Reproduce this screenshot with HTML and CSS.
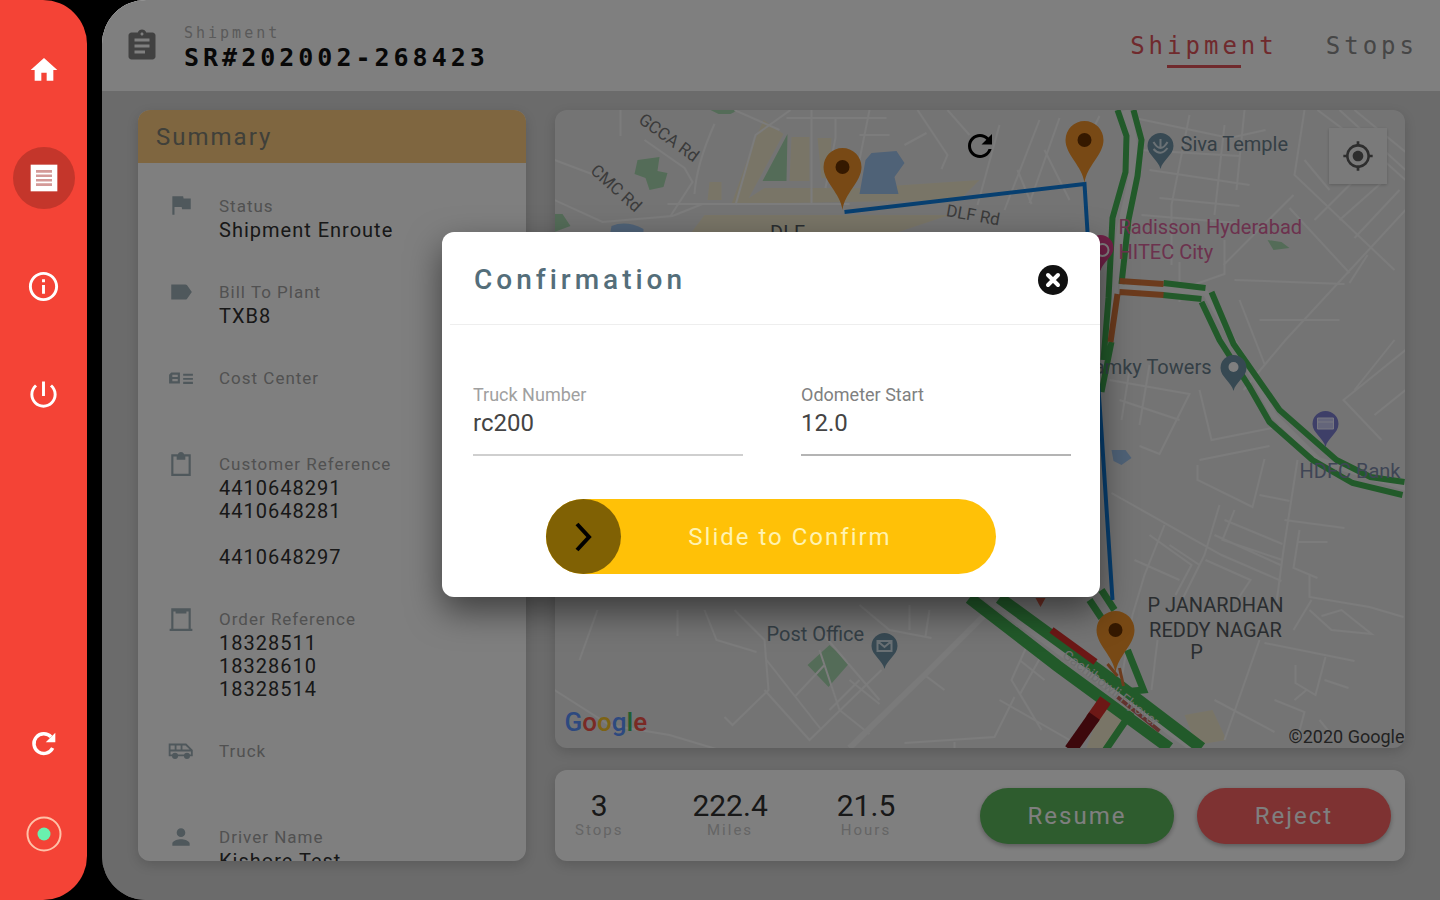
FILE: index.html
```html
<!DOCTYPE html>
<html lang="en">
<head>
    <meta charset="utf-8" />
    <meta name="viewport" content="width=device-width, initial-scale=1" />
    <title>Shipment SR#202002-268423</title>
    <link rel="stylesheet" href="styles.css">
</head>

<body>
<div class="app">

    <!-- left menu -->
    <nav class="sidebar">
        <div class="side-group">
            <button class="side-btn" aria-label="Home"><svg width="32" height="32" viewBox="0 0 24 24"><path d="M10 20v-6h4v6h5v-8h3L12 3 2 12h3v8z"/></svg></button>
            <button class="side-btn active" aria-label="Shipments"><svg width="32" height="32" viewBox="0 0 24 24"><path d="M2 2h20v20H2z"/><path class="side-lines" d="M6 7h12M6 10.300h12M6 13.700h12M6 17h12"/></svg></button>
            <button class="side-btn" aria-label="Info"><svg width="35" height="35" viewBox="0 0 24 24"><path d="M11 7h2v2h-2zm0 4h2v6h-2zm1-9C6.480 2 2 6.480 2 12s4.480 10 10 10 10-4.480 10-10S17.520 2 12 2zm0 18c-4.410 0-8-3.590-8-8s3.590-8 8-8 8 3.590 8 8-3.590 8-8 8z"/></svg></button>
            <button class="side-btn" aria-label="Log out"><svg width="35" height="35" viewBox="0 0 24 24"><path d="M13 3h-2v10h2V3zm4.830 2.170l-1.420 1.420C17.990 7.860 19 9.810 19 12c0 3.870-3.130 7-7 7s-7-3.130-7-7c0-2.190 1.010-4.140 2.580-5.420L6.170 5.170C4.230 6.820 3 9.260 3 12c0 4.970 4.030 9 9 9s9-4.030 9-9c0-2.740-1.230-5.180-3.170-6.830z"/></svg></button>
        </div>
        <div class="side-group">
            <button class="side-btn" aria-label="Sync"><svg width="32" height="32" viewBox="0 0 24 24" fill="none" stroke="#fff" stroke-width="2.6"><path d="M18.500 15a7.400 7.400 0 1 1-1.200-8.300"/><path d="M20.500 3.500v7.200h-7.200z" fill="#fff" stroke="none"/></svg></button>
            <button class="side-btn" aria-label="Online"><svg width="38" height="38" viewBox="0 0 38 38"><circle cx="19" cy="19" r="16.500" fill="none" stroke="#ffc1a8" stroke-width="2"/><circle cx="19" cy="19" r="6.500" fill="#69f0ae"/></svg></button>
        </div>
    </nav>

    <main class="main">
        <header class="topbar">
            <svg class="topbar-icon" width="36" height="36" viewBox="0 0 24 24"><path d="M19 3h-4.180C14.400 1.840 13.300 1 12 1c-1.300 0-2.400.840-2.820 2H5c-1.100 0-2 .900-2 2v14c0 1.100.900 2 2 2h14c1.100 0 2-.900 2-2V5c0-1.100-.900-2-2-2zm-7 0c.550 0 1 .450 1 1s-.450 1-1 1-1-.450-1-1 .450-1 1-1zm2 14H7v-2h7v2zm3-4H7v-2h10v2zm0-4H7V7h10v2z"/></svg>
            <div class="topbar-text">
                <p class="topbar-label">Shipment</p>
                <h1 class="topbar-title">SR#202002-268423</h1>
            </div>
            <div class="tabs">
                <a class="tab current" href="#shipment">Shipment</a>
                <a class="tab" href="#stops">Stops</a>
            </div>
        </header>

        <div class="content">
            <!-- summary -->
            <section class="card summary">
                <h2 class="summary-head">Summary</h2>
                <ul class="summary-list">
                    <li>
                        <svg width="26" height="26" viewBox="0 0 24 24"><path d="M14.400 5L14 3H4v17h2v-7h6.600l.400 2h8V5z"/></svg>
                        <div><p class="label">Status</p><p class="value">Shipment Enroute</p></div>
                    </li>
                    <li>
                        <svg width="26" height="26" viewBox="0 0 24 24"><path d="M17.630 5.840C17.270 5.330 16.670 5 16 5H3v14h13c.670 0 1.270-.330 1.630-.840L22 12z"/></svg>
                        <div><p class="label">Bill To Plant</p><p class="value">TXB8</p></div>
                    </li>
                    <li>
                        <svg width="26" height="26" viewBox="0 0 24 24"><path fill-rule="evenodd" d="M1 17V9l2-2h8v10zm3-6h5v-2H4zm0 4h5v-2H4z"/><path d="M14 8h9v2h-9zM14 12h9v1.500h-9zM14 15.500h9v2h-9z"/></svg>
                        <div><p class="label">Cost Center</p><p class="value"></p></div>
                    </li>
                    <li>
                        <svg width="26" height="26" viewBox="0 0 24 24"><path d="M19 3h-4.180C14.400 1.840 13.300 1 12 1c-1.300 0-2.400.840-2.820 2H3v20h18V3zm0 18H5V5h3v3h8V5h3z"/></svg>
                        <div><p class="label">Customer Reference</p><p class="value">4410648291<br>4410648281<br><br>4410648297</p></div>
                    </li>
                    <li>
                        <svg width="26" height="26" viewBox="0 0 24 24"><path d="M21 2H3v19H1.500v2h21v-2H21zm-2 19H5V5h2v2h10V5h2z"/></svg>
                        <div><p class="label">Order Reference</p><p class="value">18328511<br>18328610<br>18328514</p></div>
                    </li>
                    <li>
                        <svg width="26" height="26" viewBox="0 0 24 24" fill="none"><path d="M1.500 16V6h15l5.500 5.500V16zM1.500 11.500H22M7 6v5.500M12.500 6v5.500" stroke="#9fb0b8" stroke-width="1.700"/><circle cx="6.500" cy="16.500" r="2.800" fill="#9fb0b8"/><circle cx="17.500" cy="16.500" r="2.800" fill="#9fb0b8"/></svg>
                        <div><p class="label">Truck</p><p class="value"></p></div>
                    </li>
                    <li>
                        <svg width="26" height="26" viewBox="0 0 24 24"><path d="M12 12c2.210 0 4-1.790 4-4s-1.790-4-4-4-4 1.790-4 4 1.790 4 4 4zm0 2c-2.670 0-8 1.340-8 4v2h16v-2c0-2.660-5.330-4-8-4z"/></svg>
                        <div><p class="label">Driver Name</p><p class="value">Kishore Test</p></div>
                    </li>
                </ul>
            </section>

            <div class="right">
                <!-- map -->
                <section class="card map">
                    <svg class="map-svg" viewBox="555 110 851 638" preserveAspectRatio="xMidYMid slice">
                        <defs>
                            <g id="pin">
                                <path d="M0 0C-2-17-19-28-19-43a19 19 0 1 1 38 0C19-28 2-17 0 0z"/>
                                <circle cy="-43" r="7" fill="#6b3200"/>
                            </g>
                            <path id="poi" d="M0 0C-2-9-13-14-13-23a13 13 0 1 1 26 0C13-14 2-9 0 0z"/>
                        </defs>

                        <!-- areas -->
                        <g fill="#f3ebcf">
                            <path d="M764 120l20 14-38 70h-14l20-56zM792 137h18v44h-20zM818 138h14l-2 40h-8zM710 182h12v18h-14zM765 188h95l120-8-20 20-220 4zM705 215h245l-60 20H690z"/>
                            <path d="M1105 700l28 10-22 38h-24zM1185 715l28-5 14 30-30 5z"/>
                        </g>
                        <g fill="#a9d9b0">
                            <path d="M788 134l-1 47h-24zM638 160l22-3-2 14 10 2-4 14-14 3-4-12-11-4zM711 110h28l-8 4h-12zM555 214h8l8 12-16 6zM830 645l20 18-21 24-21-22zM1268 240l14 2 8 6-16 2z"/>
                        </g>
                        <g fill="#9fc4ee">
                            <path d="M872 153l25-2 8 12-10 14 4 17h-39l6-34zM612 226q15-6 32 3v8h-34zM1112 450l14 0 6 8-10 7-8-4z"/>
                        </g>

                        <!-- small streets -->
                        <g class="streets">
                            <path d="M555 160l40 15M621 110v26M645 140l40 28 8 14-22 34M668 204h182M555 200l48 22 70-6 30-12M715 124q-18 40-20 70M735 110l45 20M736 205l20-70 35-25M787 118h100M812 110v95M836 118v20l-10 50M860 135h30M870 110l-12 60M918 110l30 45-6 14M948 110l22 25M905 145l22-12"/>
                            <path d="M1000 125l-22 80M1040 120l-35 90M1060 118l-30 85M1070 200l-25-50M1100 116l-20 40M1018 170l14 34M1135 118l95 20 36-8M1140 150l100 6M1150 170l100 15M1160 198l80 8M1142 215l95 8M1190 115l-18 90v60M1225 125l-10 90M1245 110l-8 80"/>
                            <path d="M1305 110l-10 65 100 95M1318 110l60 45 28 25M1340 110l66 60M1355 110l51 42M1330 190l-25-30M1340 220l45-40M1290 208l60 65M1315 220l50-50M1355 238l45-48M1294 195l-70 70M1406 210l-120 130-42 50M1368 255l-18 28M1180 262v40M1225 240v34l-40 14h-20M1235 280l110 4M1240 300l25 64M1260 320h80"/>
                            <path d="M1406 350l-62 50 38 40M1355 390l40-50M1375 415l31-25M1110 380l80 14-30 60-20-8M1120 400l60 20M1130 370l-8 50M1150 365l-10 60M1200 390l12 50 70-14M1200 460l70-14M1198 465v15l55 27 12-48M1260 495l30 6M1112 493l110 62 60 26M1220 505l-15 50-22 44M1235 510l-12 30 60 20M1225 520l58 24M1215 535l66 30M1206 560l45 20-12 18M1298 460l-14 90-8 60M1285 520l60 8M1298 542h30M1300 530l-6 38 24 10M1150 535l42 30-16 30M1170 545l30 20M1165 525l-20 50-12 40-12 70M1135 560l45 20"/>
                            <path d="M1310 575v22l60 10 34 10M1312 600l-18 30M1310 610l22 20 40 4-30-24-20 6M1260 640l-35 100M1265 643l90 18M1296 665v18l20 12 10-38M1325 680l24 8M1275 700l30 12-8 30M1215 700l60 32M1295 700l12-10M1320 720l18 22M1158 640l-6 50"/>
                            <path d="M555 690l55 35 60 10 50 15M598 610l-18 50M678 610v26M705 610l12 30 40 12M735 610l30 30 4 50-36 35-8-8M765 690l45 50 72-70M767 660l55 70M825 665l-30 32M820 650l20 60 30 24M850 680l30 24M820 630l60 70M860 680l-30 30M860 605l30 25 42 8M910 605v25M930 610l-4 26M925 675l20 15M1030 640l-18 40 30 50M1000 700l70 40M1020 660l25 20M905 743l90-6 20-40M955 742v6M1045 650l-25 45"/>
                        </g>
                        <g class="roads">
                            <path d="M990 610l-60 60-80 78" stroke-width="6"/>
                            <path d="M1126 110q15 40 2 90t-16 130" stroke-width="8"/>
                            <path d="M1120 286l86 7 36 62 32 60 45 45 87 28" stroke-width="6"/>
                            <path d="M986 597l120 88 88 64" stroke-width="7"/>
                        </g>

                        <!-- traffic -->
                        <g class="traffic">
                            <path d="M1118 110l9 26-1 36-13 46-4 80-5 62M1134 110l8 30-4 36-9 44-7 64M1164 283l42 5M1163 295l39 4M1212 292l22 52 46 66 57 50 34 17 34 5M1202 302l18 38 30 47 20 35 43 38 40 23 50 12M1112 342l-10 50"/>
                            <path d="M970 598l88 68 112 82M1000 598l110 80 92 70" stroke-width="12"/>
                            <path d="M1090 600l12 18M1102 590l13 20M1128 650l16 40-20 2M1132 712l-26 38" stroke-width="7"/>
                        </g>
                        <g class="traffic slow">
                            <path d="M1120 281l44 3M1120 292l44 3M1118 294l-7 48"/>
                            <path d="M1120 668l4 18M1108 664l10 12" stroke-width="3"/>
                        </g>
                        <path d="M1036 598h10l-5 9z" fill="#e2604a"/>
                        <path d="M1052 630l44 32" stroke="#d8302c" stroke-width="7"/>
                        <path d="M1118 697l42 34" stroke="#c4675c" stroke-width="4"/>
                        <path d="M1106 700l-14 20" stroke="#d8302c" stroke-width="13"/>
                        <path d="M1095 716l-24 34" stroke="#7a1018" stroke-width="13"/>

                        <!-- route -->
                        <path d="M845 212l240-28 3 48 14 200 11 168" fill="none" stroke="#0f7fe0" stroke-width="4"/>

                        <!-- places -->
                        <g fill="#6f93a6">
                            <use href="#poi" x="1161" y="169"/>
                            <use href="#poi" x="1234" y="391"/>
                            <use href="#poi" x="885" y="669"/>
                        </g>
                        <use href="#poi" x="1326" y="447" fill="#7c7fd0"/>
                        <use href="#poi" x="1101" y="271" fill="#e0428f"/>
                        <circle cx="1103" cy="250" r="6" fill="none" stroke="#fff" stroke-width="2"/>
                        <circle cx="1234" cy="367" r="5" fill="#fff"/>
                        <path d="M1154 142q7 12 14 0M1154 149q7 8 14-1M1161 139v10" fill="none" stroke="#d4e2ea" stroke-width="2"/>
                        <path d="M878 641h14v10h-14zM878 641l7 6 7-6" fill="none" stroke="#d4e2ea" stroke-width="2"/>
                        <path d="M1318 418h16v11h-16zM1318 422h16" fill="#c9cbf5" stroke="#eef" stroke-width="1"/>

                        <g class="map-text">
                            <text x="1181" y="151">Siva Temple</text>
                            <text x="1212" y="374" text-anchor="end">Ramky Towers</text>
                            <text x="767" y="641">Post Office</text>
                            <text x="1300" y="478" fill="#7f8bab">HDFC Bank</text>
                            <g fill="#d9649c">
                                <text x="1119" y="234">Radisson Hyderabad</text>
                                <text x="1119" y="259">HITEC City</text>
                            </g>
                            <g class="area-name">
                                <text x="1216" y="612">P JANARDHAN</text>
                                <text x="1216" y="637">REDDY NAGAR</text>
                                <text x="1197" y="659">P</text>
                                <text x="788" y="240">DLF</text>
                            </g>
                            <g class="road-name">
                                <text transform="translate(638 122) rotate(36)">GCCA Rd</text>
                                <text transform="translate(590 172) rotate(42)">CMC Rd</text>
                                <text transform="translate(946 216) rotate(10)">DLF Rd</text>
                                <text class="flyover" transform="translate(1062 657) rotate(37)">Gachibowli Flyover</text>
                            </g>
                        </g>

                        <g fill="#f0932b">
                            <use href="#pin" x="843" y="210"/>
                            <use href="#pin" x="1085" y="183"/>
                            <use href="#pin" x="1116" y="673"/>
                        </g>

                        <text class="google" x="565" y="731"><tspan fill="#5b93ff">G</tspan><tspan fill="#f4554a">o</tspan><tspan fill="#fbc62a">o</tspan><tspan fill="#5b93ff">g</tspan><tspan fill="#3fbf62">l</tspan><tspan fill="#f4554a">e</tspan></text>
                        <text class="copyright" x="1405" y="743" text-anchor="end">©2020 Google</text>
                    </svg>
                    <button class="map-refresh" aria-label="Refresh map"><svg width="36" height="36" viewBox="0 0 24 24"><path d="M17.650 6.350C16.200 4.900 14.210 4 12 4c-4.420 0-7.990 3.580-7.990 8s3.570 8 7.990 8c3.730 0 6.840-2.550 7.730-6h-2.080c-.820 2.330-3.040 4-5.650 4-3.310 0-6-2.690-6-6s2.690-6 6-6c1.660 0 3.140.690 4.220 1.780L13 11h7V4l-2.350 2.350z"/></svg></button>
                    <button class="map-locate" aria-label="My location"><svg width="32" height="32" viewBox="0 0 24 24"><path d="M12 8c-2.210 0-4 1.790-4 4s1.790 4 4 4 4-1.790 4-4-1.790-4-4-4zm8.940 3A8.994 8.994 0 0 0 13 3.060V1h-2v2.060A8.994 8.994 0 0 0 3.060 11H1v2h2.060A8.994 8.994 0 0 0 11 20.940V23h2v-2.060A8.994 8.994 0 0 0 20.940 13H23v-2h-2.060zM12 19c-3.870 0-7-3.130-7-7s3.130-7 7-7 7 3.130 7 7-3.130 7-7 7z"/></svg></button>
                </section>

                <!-- totals -->
                <section class="card totals">
                    <div class="total"><p class="total-num">3</p><p class="total-label">Stops</p></div>
                    <div class="total"><p class="total-num">222.4</p><p class="total-label">Miles</p></div>
                    <div class="total"><p class="total-num">21.5</p><p class="total-label">Hours</p></div>
                    <div class="actions">
                        <button class="btn resume">Resume</button>
                        <button class="btn reject">Reject</button>
                    </div>
                </section>
            </div>
        </div>

        <!-- confirmation dialog -->
        <div class="overlay">
            <form class="dialog" role="dialog" aria-labelledby="dialog-title">
                <div class="dialog-head">
                    <h2 id="dialog-title">Confirmation</h2>
                    <button type="button" class="close" aria-label="Close"><svg width="30" height="30" viewBox="0 0 30 30"><circle cx="15" cy="15" r="15" fill="#111"/><path d="M10 10l10 10M20 10L10 20" stroke="#fff" stroke-width="4" stroke-linecap="round"/></svg></button>
                </div>
                <div class="fields">
                    <div class="field">
                        <label for="truck">Truck Number</label>
                        <input id="truck" type="text" value="rc200" />
                    </div>
                    <div class="field dark">
                        <label for="odometer">Odometer Start</label>
                        <input id="odometer" type="text" value="12.0" />
                    </div>
                </div>
                <div class="slide">
                    <input id="slide" type="range" min="0" max="100" value="0" />
                    <label for="slide">Slide to Confirm</label>
                    <svg width="75" height="75" viewBox="0 0 75 75"><path d="M31 25l12 13-12 13" fill="none" stroke="#000" stroke-width="4"/></svg>
                </div>
            </form>
        </div>
    </main>
</div>
</body>
</html>
```

FILE: styles.css
```css
/* reset */
*{box-sizing:border-box;}
body,h1,h2,p,ul,li{margin:0; padding:0;}
li{list-style:none;}
a{text-decoration:none;}
button{border:0; padding:0; background:none; font-family:inherit; cursor:pointer;}
svg{display:block;}

body{background:#000; font-family:Roboto,"Open Sans",sans-serif; color:#303030;}

.app{display:flex; gap:15px; height:100vh; overflow:hidden;}

/* left menu */
.sidebar{flex:none; width:87px; padding:39px 0 35px; display:flex; flex-direction:column; justify-content:space-between; background:#f44336; border-radius:0 44px 44px 0;}
.side-group{display:flex; flex-direction:column; align-items:center; gap:46px;}
.side-group + .side-group{gap:28px;}
.side-btn{width:62px; height:62px; border-radius:50%; display:flex; align-items:center; justify-content:center; fill:#fff;}
.side-btn.active{background:#c4362b;}
.side-lines{stroke:#d49a98; stroke-width:2;}

/* main */
.main{flex:1; min-width:0; position:relative; display:flex; flex-direction:column; background:#d6d6d6; border-radius:44px 0 0 44px; overflow:hidden;}

.topbar{flex:none; height:91px; padding:0 22px; display:flex; align-items:center; background:#fff;}
.topbar-icon{fill:#828282;}
.topbar-text{margin-left:24px; padding-top:6px; font-family:"DejaVu Sans Mono",monospace;}
.topbar-label{font-size:15px; line-height:18px; letter-spacing:3px; color:#b4b4b4;}
.topbar-title{font-size:25px; line-height:32px; letter-spacing:4px; color:#111;}
.tabs{margin-left:auto; padding-top:3px; display:flex; gap:48px; font-family:"DejaVu Sans Mono",monospace;}
.tab{font-size:24px; line-height:38px; letter-spacing:4px; color:#8c8c8c; display:flex; flex-direction:column; align-items:center;}
.tab:after{content:""; width:74px; height:3px;}
.tab.current{color:#e0545a;}
.tab.current:after{background:#e0545a;}

.content{flex:1; min-height:0; padding:19px 35px 39px 36px; display:flex; gap:29px;}
.card{background:#fff; border-radius:12px; overflow:hidden; box-shadow:0 4px 12px rgba(0,0,0,.15);}

/* summary */
.summary{flex:none; width:388px;}
.summary-head{height:53px; padding-left:18px; background:#ffcc80; font-size:24px; font-weight:400; line-height:54px; letter-spacing:2px; color:#808074;}
.summary-list{padding:30px 0 0 30px;}
.summary-list li{display:flex; gap:25px; margin-bottom:37px; fill:#9fb0b8;}
.label{font-size:17px; line-height:26px; letter-spacing:1px; color:#a2a2a2;}
.value{min-height:23px; font-size:20px; line-height:23px; letter-spacing:1px; color:#303030;}

/* map */
.right{flex:1; min-width:0; display:flex; flex-direction:column; gap:22px;}
.map{flex:1; min-height:0; position:relative; background:#e9e9e9;}
.map-svg{width:100%; height:100%;}
.streets{fill:none; stroke:#f8f8f8; stroke-width:2;}
.roads{fill:none; stroke:#f4f4f4;}
.traffic{fill:none; stroke:#45b554; stroke-width:6;}
.slow{stroke:#d9773a;}
.map-text{font-size:20px; fill:#6a7f8c;}
.area-name{fill:#555b60; text-anchor:middle;}
.road-name{font-size:17px; fill:#777;}
.flyover{font-size:14px; fill:#ddd;}
.google{font-size:26px; font-weight:500;}
.copyright{font-size:18px; fill:#444;}
.map-refresh{position:absolute; left:50%; top:18px; margin-left:-18px;}
.map-locate{position:absolute; right:18px; top:18px; width:58px; height:56px; display:flex; align-items:center; justify-content:center; background:#f4f4f4; fill:#5c5c5c; box-shadow:0 1px 3px rgba(0,0,0,.2);}

/* totals */
.totals{flex:none; height:91px; padding:0 14px 0 20px; display:flex; align-items:center;}
.total{text-align:center; min-width:46px; margin-right:69px;}
.total-num{font-size:30px; line-height:30px; color:#303030;}
.total-label{font-size:15px; line-height:19px; letter-spacing:2px; color:#cacaca;}
.actions{margin-left:auto; display:flex; gap:23px;}
.btn{width:194px; height:56px; border-radius:28px; font-size:24px; letter-spacing:2px; color:#fff; box-shadow:0 2px 5px rgba(0,0,0,.3);}
.resume{background:#5cb85c;}
.reject{background:#fc6464;}

/* dialog */
.overlay{position:absolute; top:0; right:0; bottom:0; left:0; padding-bottom:71px; display:flex; align-items:center; justify-content:center; background:rgba(0,0,0,.5);}
.dialog{width:658px; padding-bottom:23px; background:#fff; border-radius:12px; box-shadow:0 14px 34px rgba(0,0,0,.5);}
.dialog-head{height:93px; margin-left:8px; padding:3px 32px 0 24px; display:flex; align-items:center; justify-content:space-between; border-bottom:1px solid #eee;}
.dialog-head h2{font-size:28px; font-weight:500; letter-spacing:4px; color:#546e7a;}
.fields{display:flex; gap:58px; padding:59px 29px 43px 31px;}
.field{flex:1; min-width:0; color:#a0a0a0;}
.field label{display:block; font-size:18px; line-height:22px;}
.field input{display:block; width:100%; height:50px; padding:0 0 14px; border:0; border-bottom:2px solid #cfcfcf; outline:0; background:none; font-family:inherit; font-size:24px; color:#444;}
.field.dark{color:#808080;}
.field.dark input{border-color:#b4b4b4;}

.slide{width:450px; margin:0 auto; display:grid; align-items:center;}
.slide > *{grid-area:1/1;}
.slide input{-webkit-appearance:none; appearance:none; width:100%; height:75px; margin:0; border-radius:38px; background:#ffc107;}
.slide input::-webkit-slider-thumb{-webkit-appearance:none; width:75px; height:75px; border-radius:50%; background:#806104;}
.slide label{padding-left:38px; text-align:center; font-size:24px; letter-spacing:2px; color:#fff3b0; pointer-events:none;}
.slide svg{pointer-events:none;}
```
